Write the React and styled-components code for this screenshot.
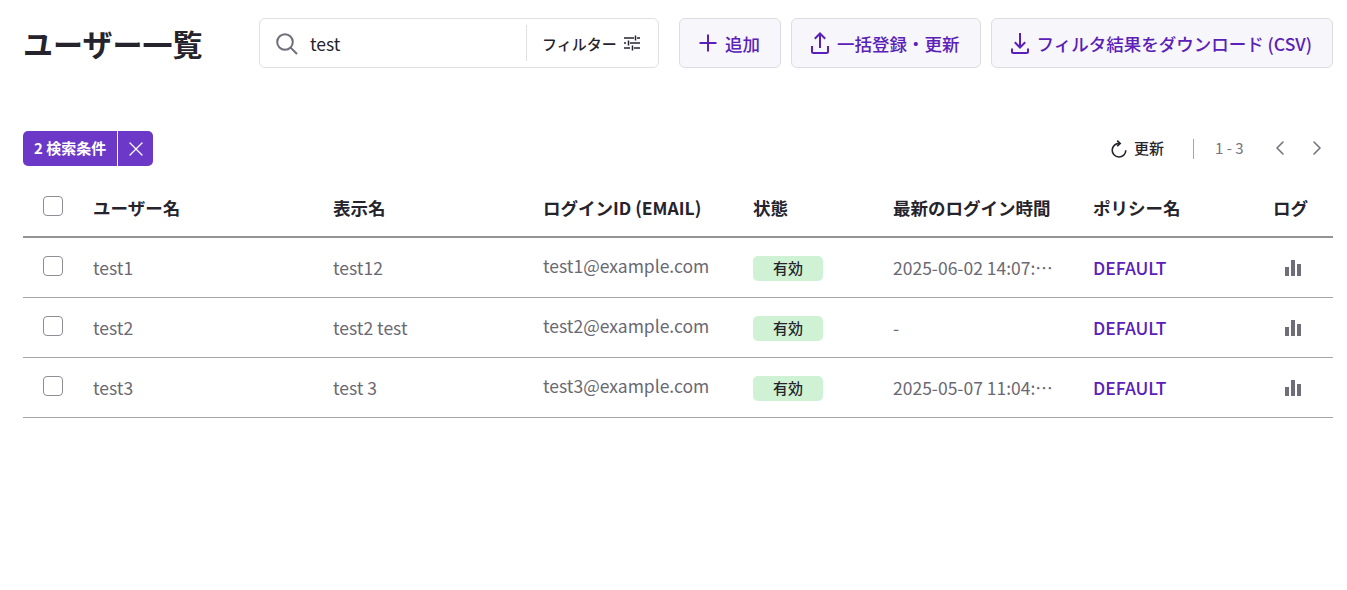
import styled, { createGlobalStyle } from "styled-components";
import { X, ChevronLeft, ChevronRight } from "lucide-react";

const GlobalStyle = createGlobalStyle`
  html, body {
    margin: 0;
    background: #fff;
    font-family: "Noto Sans CJK JP", "Noto Sans", sans-serif;
    color: #25242c;
  }
`;

const users = [
  { name: "test1", display: "test12", email: "test1@example.com", login: "2025-06-02 14:07:…" },
  { name: "test2", display: "test2 test", email: "test2@example.com", login: "-" },
  { name: "test3", display: "test 3", email: "test3@example.com", login: "2025-05-07 11:04:…" },
];

function SearchIcon() {
  return (
    <svg width="23" height="23" viewBox="0 0 23 23" fill="none" stroke="#6f6d78" strokeWidth="2">
      <circle cx="10" cy="10" r="7.8" />
      <path d="M15.6 15.6 22 22" />
    </svg>
  );
}

function TuneIcon() {
  return (
    <svg width="16" height="16" viewBox="0 0 16 16" fill="none" stroke="#25242c" strokeWidth="1.5">
      <path d="M0 3h10M13 3h3M11.5 0.5v5M0 8h2M6 8h10M4.5 5.5v5M0 13h6M10 13h6M8.5 10.5v5" />
    </svg>
  );
}

function PlusIcon() {
  return (
    <svg width="18" height="18" viewBox="0 0 18 18" fill="none" stroke="currentColor" strokeWidth="2">
      <path d="M9 0.5v17M0.5 9h17" />
    </svg>
  );
}

function UploadIcon() {
  return (
    <svg width="18" height="22" viewBox="0 0 18 22" fill="none" stroke="currentColor" strokeWidth="2">
      <path d="M9 16V1.5M3.8 6.7 9 1.5l5.2 5.2M1 14v5.5a1.5 1.5 0 0 0 1.5 1.5h13a1.5 1.5 0 0 0 1.5-1.5V14" />
    </svg>
  );
}

function DownloadIcon() {
  return (
    <svg width="18" height="22" viewBox="0 0 18 22" fill="none" stroke="currentColor" strokeWidth="2">
      <path d="M9 1v14.5M3.8 10.3 9 15.5l5.2-5.2M1 16.5v3a1.5 1.5 0 0 0 1.5 1.5h13a1.5 1.5 0 0 0 1.5-1.5v-3" />
    </svg>
  );
}

function RefreshIcon() {
  return (
    <svg width="18" height="18" viewBox="0 0 18 18" fill="none" stroke="#25242c" strokeWidth="1.6">
      <path d="M9.5 3.4A6.8 6.8 0 1 0 15.8 10.2" />
      <path d="M7.2 0.6 10.2 3.4 7.2 6.2" />
    </svg>
  );
}

function LogIcon() {
  return (
    <svg width="18" height="18" viewBox="0 0 18 18" fill="#6f6d78">
      <rect x="1" y="8" width="4" height="9" />
      <rect x="7" y="1" width="4" height="16" />
      <rect x="13" y="5" width="4" height="12" />
    </svg>
  );
}

export default function App() {
  return (
    <Page>
      <GlobalStyle />
      <Header>
        <Title>ユーザー一覧</Title>
        <SearchBox>
          <SearchIcon />
          <SearchValue>test</SearchValue>
          <FilterButton>
            フィルター
            <TuneIcon />
          </FilterButton>
        </SearchBox>
        <Actions>
          <ActionButton><PlusIcon />追加</ActionButton>
          <ActionButton><UploadIcon />一括登録・更新</ActionButton>
          <ActionButton><DownloadIcon />フィルタ結果をダウンロード (CSV)</ActionButton>
        </Actions>
      </Header>

      <Toolbar>
        <Chips>
          <Chip>2 検索条件</Chip>
          <ChipClose><X size={24} strokeWidth={1.3} /></ChipClose>
        </Chips>
        <Pager>
          <Refresh><RefreshIcon /><RefreshLabel>更新</RefreshLabel></Refresh>
          <Divider />
          <Range>1 - 3</Range>
          <PageButton><ChevronLeft size={24} strokeWidth={1.6} /></PageButton>
          <PageButton><ChevronRight size={24} strokeWidth={1.6} /></PageButton>
        </Pager>
      </Toolbar>

      <HeadRow>
        <CheckCell><Check /></CheckCell>
        <span>ユーザー名</span>
        <span>表示名</span>
        <span>ログインID (EMAIL)</span>
        <span>状態</span>
        <span>最新のログイン時間</span>
        <span>ポリシー名</span>
        <span>ログ</span>
      </HeadRow>

      {users.map((u) => (
        <Row key={u.name}>
          <CheckCell><Check /></CheckCell>
          <Cell>{u.name}</Cell>
          <Cell>{u.display}</Cell>
          <Cell $raised>{u.email}</Cell>
          <StatusCell><Status>有効</Status></StatusCell>
          <Cell>{u.login}</Cell>
          <PolicyLink>DEFAULT</PolicyLink>
          <LogCell><LogIcon /></LogCell>
        </Row>
      ))}
    </Page>
  );
}

const Page = styled.div`
  padding: 18px 14px 0 23px;
`;

const Header = styled.header`
  display: flex;
  align-items: center;
  height: 50px;
`;

const Title = styled.h1`
  width: 236px;
  margin: 0;
  font-size: 30px;
  line-height: 50px;
  font-weight: 700;
  color: #25242c;
`;

const SearchBox = styled.div`
  box-sizing: border-box;
  display: flex;
  align-items: center;
  width: 400px;
  height: 50px;
  padding-left: 15px;
  border: 1px solid #e0dfe4;
  border-radius: 6px;
`;

const SearchValue = styled.span`
  flex: 1;
  margin-left: 12px;
  font-size: 17.5px;
  color: #25242c;
`;

const FilterButton = styled.div`
  box-sizing: border-box;
  display: flex;
  align-items: center;
  gap: 7px;
  width: 132px;
  height: 36px;
  padding-left: 15px;
  border-left: 1px solid #e0dfe4;
  font-size: 15px;
  font-weight: 500;
`;

const Actions = styled.div`
  display: flex;
  gap: 10px;
  margin-left: 20px;
`;

const ActionButton = styled.button`
  display: flex;
  align-items: center;
  gap: 8px;
  height: 50px;
  padding: 0 20px 0 19px;
  border: 1px solid #dddce2;
  border-radius: 6px;
  background: #f7f6fa;
  color: #5a20b8;
  font-family: inherit;
  font-size: 17.5px;
  font-weight: 500;
`;

const Toolbar = styled.div`
  display: flex;
  align-items: center;
  justify-content: space-between;
  height: 35px;
  margin-top: 63px;
`;

const Chips = styled.div`
  display: flex;
  gap: 1px;
`;

const Chip = styled.div`
  display: flex;
  align-items: center;
  height: 35px;
  padding: 0 11px 2px 11px;
  box-sizing: border-box;
  border-radius: 5px 0 0 5px;
  background: #6c38c8;
  color: #fff;
  font-size: 15px;
  font-weight: 700;
`;

const ChipClose = styled.div`
  display: flex;
  align-items: center;
  justify-content: center;
  width: 35px;
  height: 35px;
  border-radius: 0 5px 5px 0;
  background: #6c38c8;
  color: #fff;
`;

const Pager = styled.div`
  display: flex;
  align-items: center;
  padding-bottom: 2px;
`;

const Refresh = styled.div`
  display: flex;
  align-items: center;
  gap: 6px;
  font-size: 15px;
  font-weight: 500;
  margin-top: 2px;
`;

const RefreshLabel = styled.span`
  margin-top: -2px;
`;

const Divider = styled.div`
  width: 1px;
  height: 20px;
  margin: 2px 21px 0 29px;
  background: #a5a4ac;
`;

const Range = styled.span`
  width: 44px;
  font-size: 15px;
  color: #75737e;
`;

const PageButton = styled.div`
  display: flex;
  justify-content: center;
  width: 32px;
  margin-left: 5px;
  color: #75737e;
`;

const columns = "70px 240px 210px 210px 140px 200px 180px 60px";

const HeadRow = styled.div`
  display: grid;
  grid-template-columns: ${columns};
  align-items: center;
  height: 58px;
  margin-top: 12px;
  border-bottom: 2px solid #949494;
  font-size: 17.5px;
  font-weight: 700;
  color: #25242c;
`;

const Row = styled.div`
  display: grid;
  grid-template-columns: ${columns};
  align-items: center;
  box-sizing: border-box;
  height: 60px;
  border-bottom: 1px solid #a6a6a6;
  font-size: 17.5px;
  color: #6a6873;
`;

const CheckCell = styled.div`
  display: flex;
  padding-left: 20px;
  margin-top: -3px;
`;

const Check = styled.div`
  box-sizing: border-box;
  width: 20px;
  height: 20px;
  border: 1px solid #8f8e96;
  border-radius: 4px;
  background: #fff;
`;

const Cell = styled.div`
  position: relative;
  top: ${(p) => (p.$raised ? "-2px" : "0")};
`;

const StatusCell = styled.div`
  margin-top: 1px;
`;

const Status = styled.span`
  display: flex;
  align-items: center;
  justify-content: center;
  width: 70px;
  height: 25px;
  padding-bottom: 1px;
  box-sizing: border-box;
  border-radius: 5px;
  background: #cff2d5;
  color: #25242c;
  font-size: 15px;
  font-weight: 500;
`;

const PolicyLink = styled.div`
  color: #5a20b8;
  font-weight: 500;
`;

const LogCell = styled.div`
  display: flex;
  padding-left: 11px;
`;
